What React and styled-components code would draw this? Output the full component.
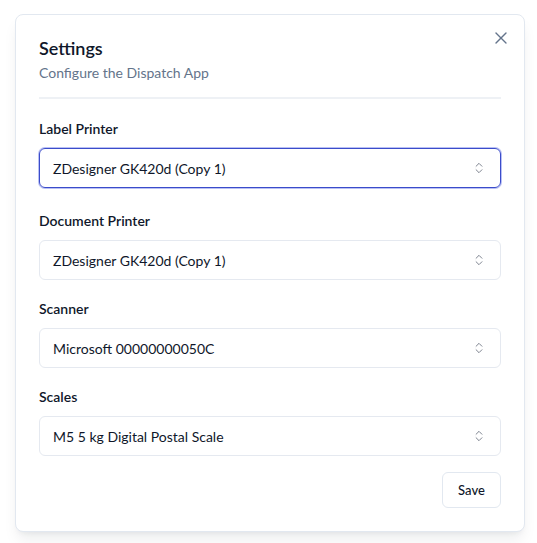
import React from "react"
import styled, { createGlobalStyle } from "styled-components"
import { X, ChevronsUpDown } from "lucide-react"

const GlobalStyle = createGlobalStyle`
  html, body {
    margin: 0;
    padding: 0;
    background: #ffffff;
  }
  body {
    font-family: Lato, "Noto Sans", sans-serif;
    color: #0f172a;
  }
  * {
    box-sizing: border-box;
  }
`

const fields = [
  { label: "Label Printer", value: "ZDesigner GK420d (Copy 1)", focused: true },
  { label: "Document Printer", value: "ZDesigner GK420d (Copy 1)" },
  { label: "Scanner", value: "Microsoft 00000000050C" },
  { label: "Scales", value: "M5 5 kg Digital Postal Scale" },
]

export default function App() {
  return (
    <Page>
      <GlobalStyle />
      <Dialog>
        <CloseButton aria-label="Close">
          <X size={20} strokeWidth={1.6} />
        </CloseButton>
        <Header>
          <Title>Settings</Title>
          <Subtitle>Configure the Dispatch App</Subtitle>
        </Header>
        <Divider />
        <Form>
          {fields.map((f) => (
            <Field key={f.label} $focused={f.focused}>
              <Label>{f.label}</Label>
              <Select $focused={f.focused}>
                <span>{f.value}</span>
                <ChevronsUpDown size={14} strokeWidth={1.5} color="#6b7280" />
              </Select>
            </Field>
          ))}
        </Form>
        <Footer>
          <SaveButton>Save</SaveButton>
        </Footer>
      </Dialog>
    </Page>
  )
}

const Page = styled.div`
  width: 537px;
  height: 543px;
  padding: 14px 0 0 15px;
  overflow: hidden;
`

const Dialog = styled.div`
  position: relative;
  width: 510px;
  padding: 23px;
  background: #ffffff;
  border: 1px solid #e2e8f0;
  border-radius: 8px;
  box-shadow: 0 10px 15px -3px rgba(15, 23, 42, 0.08),
    0 4px 6px -4px rgba(15, 23, 42, 0.08);
`

const CloseButton = styled.button`
  position: absolute;
  top: 13px;
  right: 13px;
  width: 20px;
  height: 20px;
  padding: 0;
  border: none;
  background: none;
  color: #64748b;
  display: flex;
  align-items: center;
  justify-content: center;
`

const Header = styled.div`
  display: flex;
  flex-direction: column;
  gap: 5px;
`

const Title = styled.h2`
  margin: 0;
  font-size: 18px;
  line-height: 20px;
  font-weight: 600;
  color: #0f172a;
`

const Subtitle = styled.p`
  margin: 0;
  font-size: 14px;
  line-height: 20px;
  color: #64748b;
`

const Divider = styled.div`
  height: 2px;
  background: #eef1f5;
  margin: 14px 0 20px;
`

const Form = styled.div`
  display: flex;
  flex-direction: column;
  gap: 19px;
`

const Field = styled.div`
  display: flex;
  flex-direction: column;
  gap: 9px;
  margin-bottom: ${(p) => (p.$focused ? "4px" : "0")};
`

const Label = styled.label`
  font-size: 14px;
  line-height: 20px;
  font-weight: 600;
  color: #0f172a;
`

const Select = styled.div`
  height: 40px;
  display: flex;
  align-items: center;
  justify-content: space-between;
  padding: 0 14px 0 13px;
  font-size: 14px;
  color: #0f172a;
  border-radius: 6px;
  border: 1px solid ${(p) => (p.$focused ? "#3b4cca" : "#e5e9f0")};
  box-shadow: ${(p) =>
    p.$focused ? "0 0 0 1px rgba(99, 115, 230, 0.45)" : "none"};
`

const Footer = styled.div`
  display: flex;
  justify-content: flex-end;
  margin-top: 16px;
`

const SaveButton = styled.button`
  height: 36px;
  width: 59px;
  border: 1px solid #e2e8f0;
  border-radius: 6px;
  background: #ffffff;
  font-family: inherit;
  font-size: 13px;
  font-weight: 500;
  color: #0f172a;
`
